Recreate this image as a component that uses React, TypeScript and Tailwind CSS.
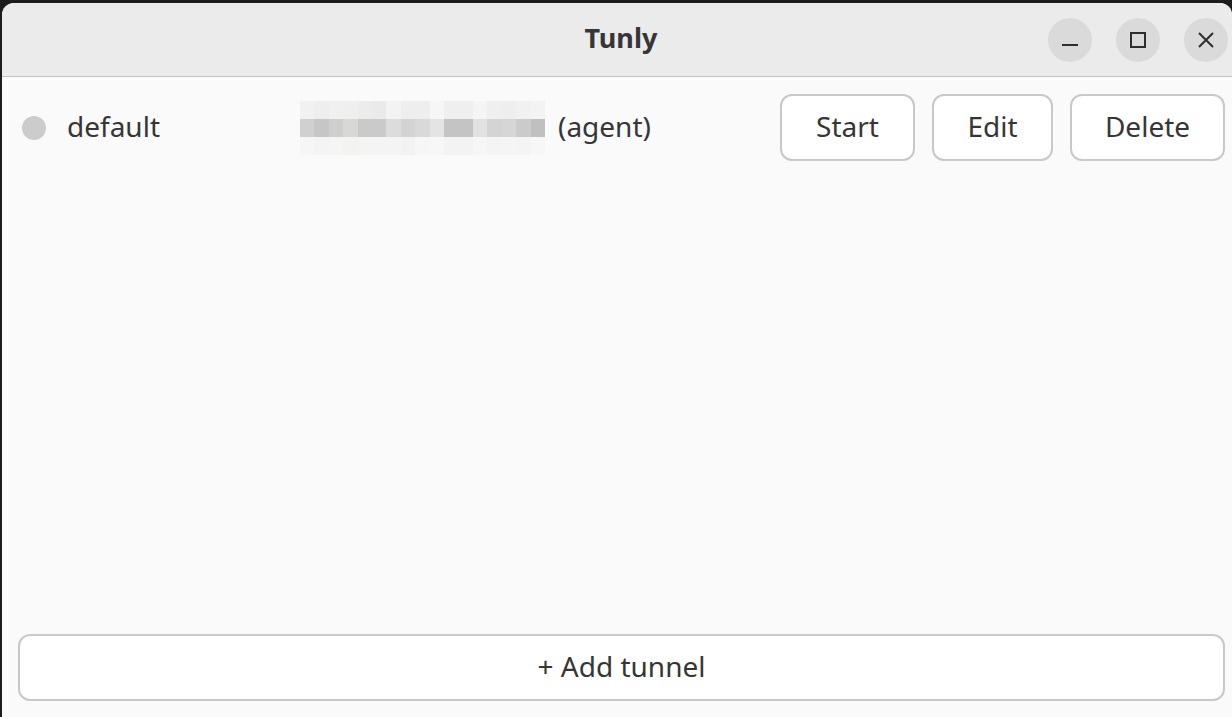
// redacted host, drawn as a pixelated strip (3 rows x 17 blocks)
const hostBlocks: string[][] = [
  ["#f1f1f1", "#eeeeee", "#f0f0f0", "#efefef", "#ececec", "#eaeaea", "#f3f3f3", "#eeeeee", "#edeeed", "#f6f6f6", "#efefef", "#efefef", "#f5f5f5", "#efefef", "#eeeeee", "#f1f1f1", "#f3f3f3"],
  ["#d0d0d0", "#c6c6c6", "#cfcfcf", "#d8d8d6", "#cacaca", "#cacaca", "#dcdcdc", "#d3d3d3", "#d9d9d9", "#e4e4e4", "#c4c4c4", "#c4c4c4", "#e2e2e2", "#d4d4d4", "#d6d6d6", "#cbcbcb", "#c0c0c0"],
  ["#f6f6f6", "#f4f4f4", "#f5f5f5", "#f3f3f1", "#f4f4f4", "#f4f4f4", "#f4f4f4", "#f2f2f2", "#f6f6f6", "#f7f7f7", "#f3f3f3", "#f3f3f3", "#f6f6f6", "#f4f4f4", "#f5f5f5", "#f4f4f4", "#f7f7f7"],
];

function WindowButton({ children }: { children: React.ReactNode }) {
  return (
    <button className="w-[44px] h-[44px] rounded-full bg-[#dadada] flex items-center justify-center text-[#2e2e2e]">
      <svg width="44" height="44" viewBox="0 0 44 44" fill="none" stroke="currentColor" strokeWidth="2">
        {children}
      </svg>
    </button>
  );
}

function RowButton({ label, width }: { label: string; width: string }) {
  return (
    <button
      className={`${width} h-[67px] pb-[4px] rounded-[12px] border-2 border-[#c8c8c8] bg-white text-[28px] text-[#363636] flex items-center justify-center`}
    >
      {label}
    </button>
  );
}

export default function App() {
  return (
    <div
      className="w-[1232px] h-[717px] bg-[#1c1c1c] pl-[2px] pt-[3px] flex overflow-hidden"
      style={{ fontFamily: '"Noto Sans", "Open Sans", sans-serif' }}
    >
      <div className="flex-1 flex flex-col rounded-t-[12px] overflow-hidden bg-[#fafafa]">
        {/* header bar */}
        <div className="h-[74px] shrink-0 bg-[#ebebeb] border-b border-[#c2c2c2] flex items-center relative">
          <div className="flex-1 text-center text-[27px] font-bold text-[#363636] pl-[8px] pb-[2px]">Tunly</div>
          <div className="absolute right-[4px] top-[15px] flex gap-[24px]">
            <WindowButton>
              <path d="M14 27h16" />
            </WindowButton>
            <WindowButton>
              <rect x="15" y="15" width="14" height="14" />
            </WindowButton>
            <WindowButton>
              <path d="M15 15l14 14M29 15l-14 14" />
            </WindowButton>
          </div>
        </div>

        {/* tunnel list */}
        <div className="flex-1 flex flex-col">
          <div className="flex items-center pl-[20px] pr-[7px] pt-[17px]">
            <div className="w-[24px] h-[24px] rounded-full bg-[#cccccc] shrink-0" />
            <div className="w-[254px] pl-[21px] pb-[4px] text-[28px] text-[#363636]">default</div>
            <div className="flex flex-col w-[245px]">
              {hostBlocks.map((row, i) => (
                <div key={i} className="flex h-[18px]">
                  {row.map((c, j) => (
                    <div key={j} className="flex-1" style={{ backgroundColor: c }} />
                  ))}
                </div>
              ))}
            </div>
            <div className="pl-[13px] pb-[4px] text-[28px] text-[#363636]">(agent)</div>
            <div className="ml-auto flex gap-[17px]">
              <RowButton label="Start" width="w-[135px]" />
              <RowButton label="Edit" width="w-[121px]" />
              <RowButton label="Delete" width="w-[155px]" />
            </div>
          </div>
        </div>

        <div className="px-[16px] pb-[16px] pr-[7px]">
          <button className="w-full h-[67px] pb-[4px] rounded-[12px] border-2 border-[#c8c8c8] bg-white text-[28px] text-[#363636]">
            + Add tunnel
          </button>
        </div>
      </div>
    </div>
  );
}
